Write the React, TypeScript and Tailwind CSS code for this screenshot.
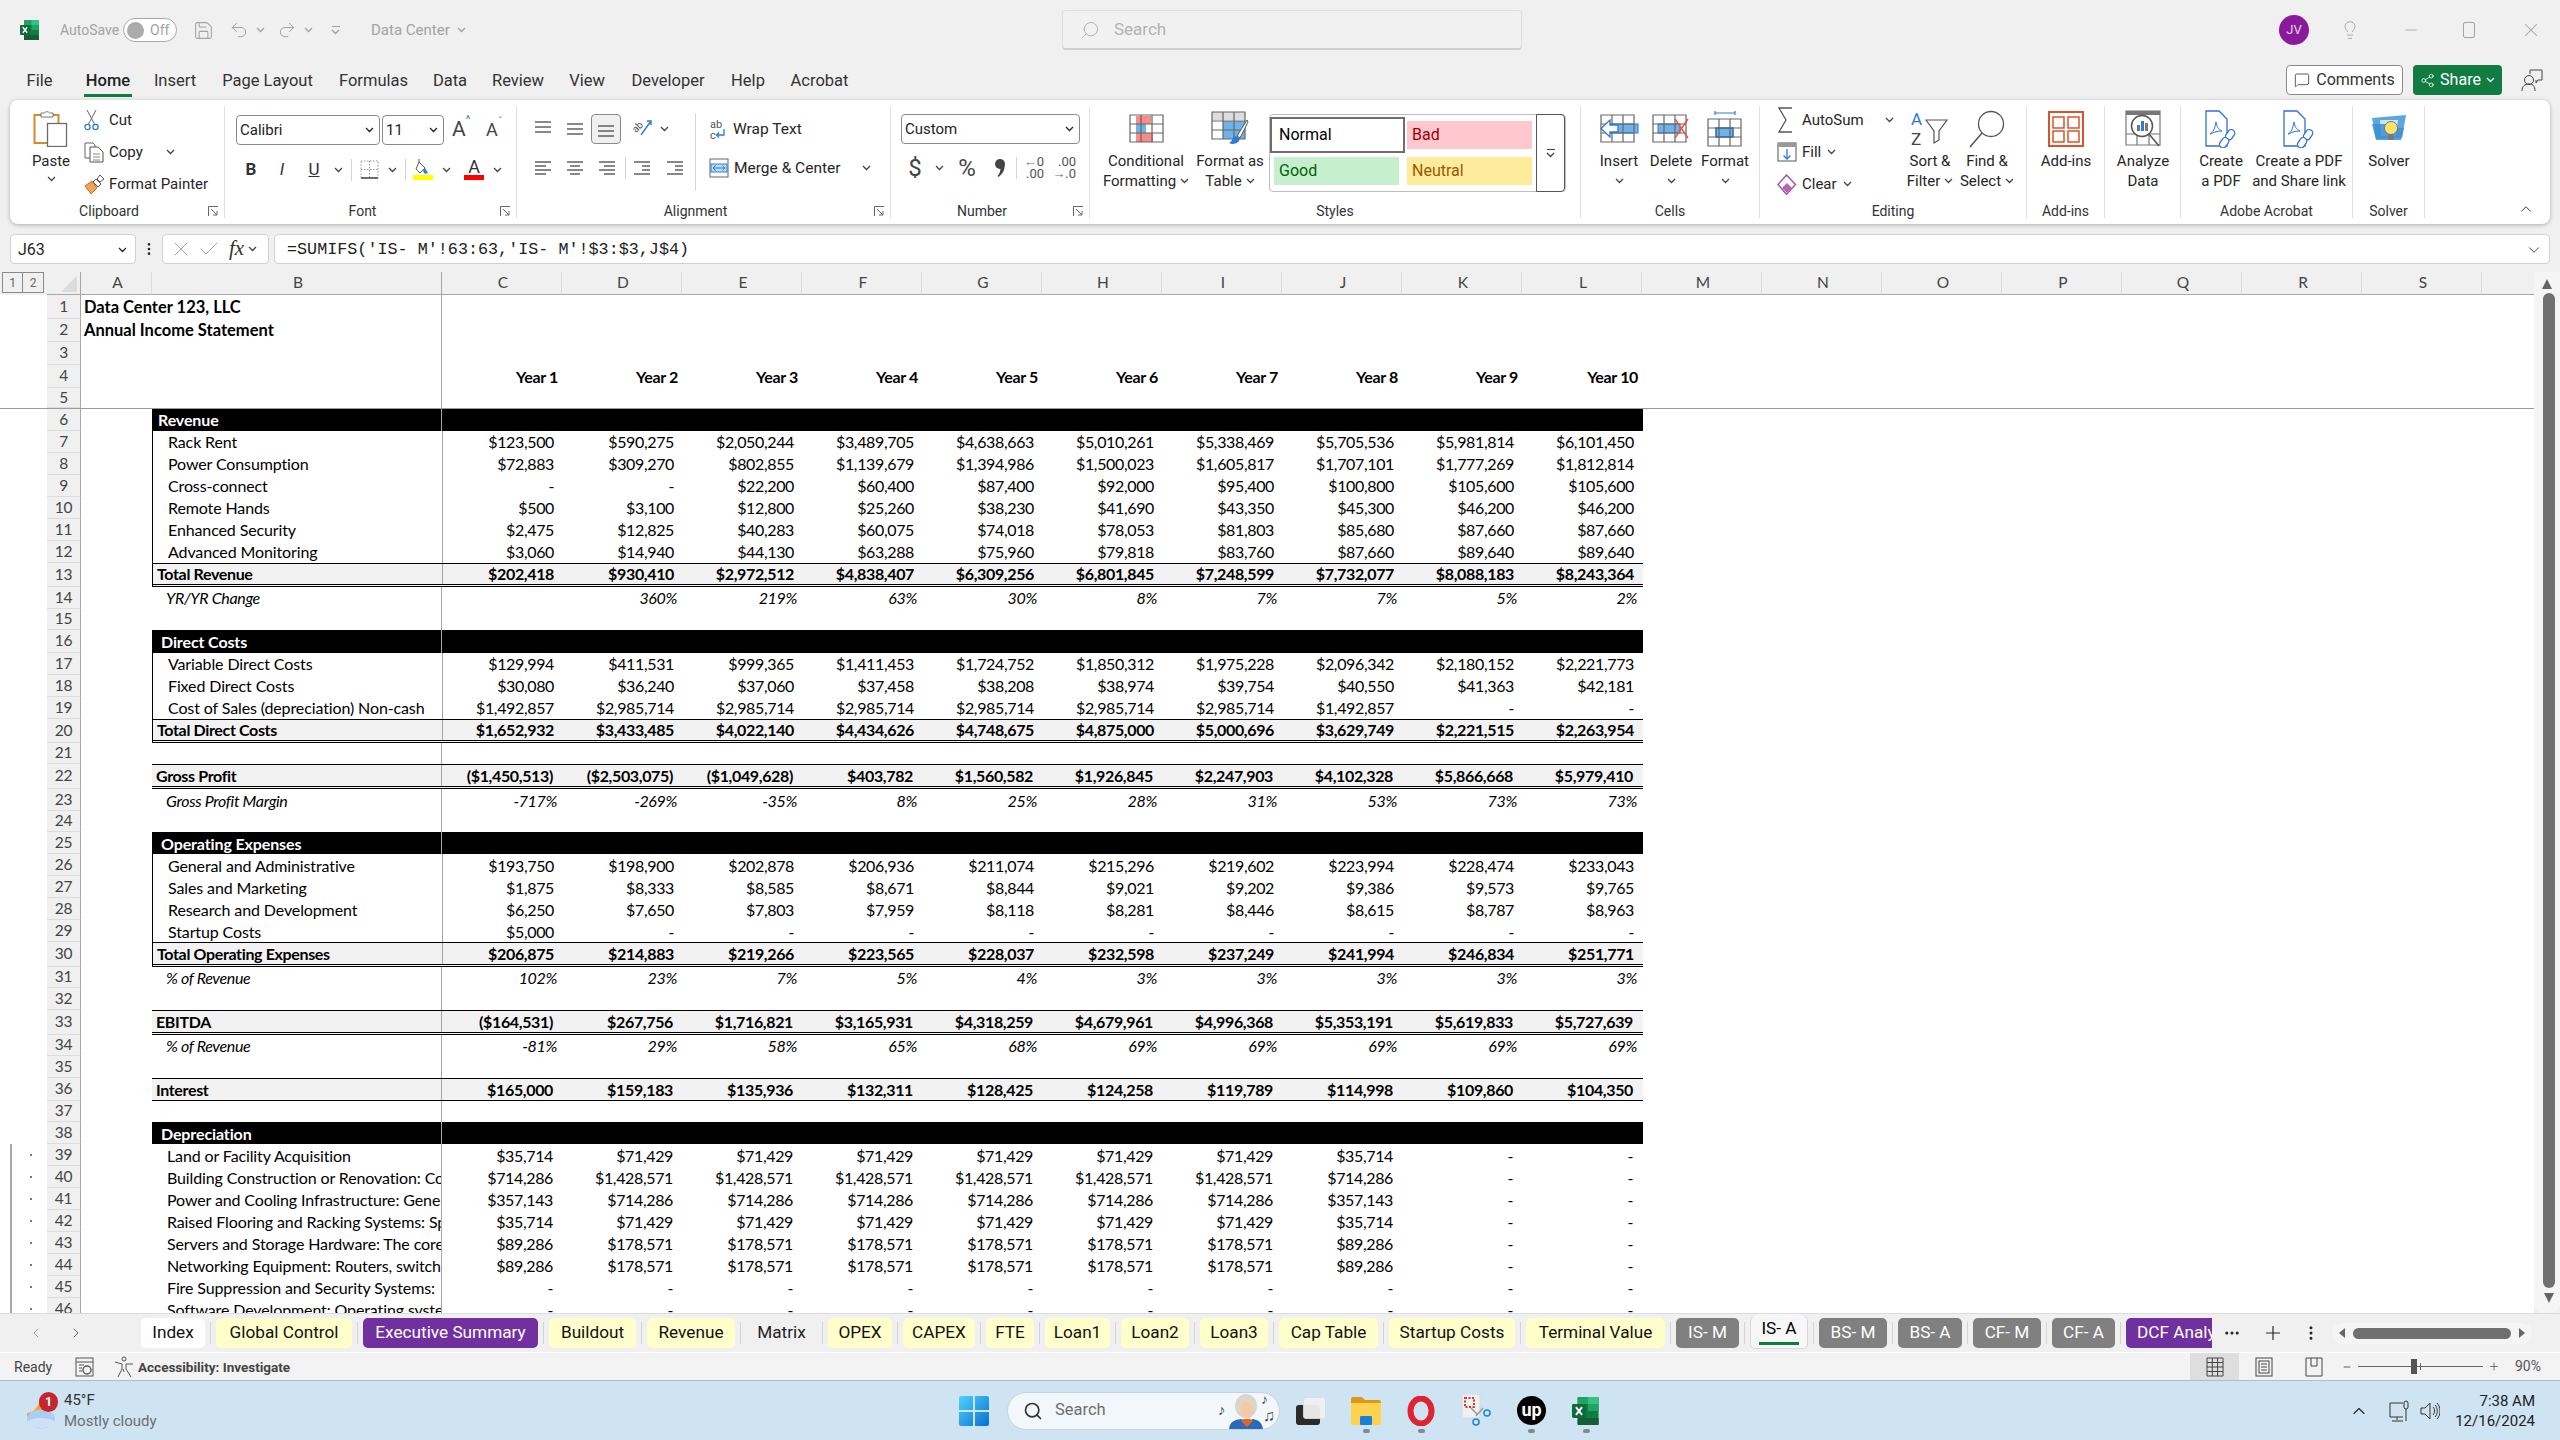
import React from "react";
import { Search, Lightbulb, Minus, X, ChevronUp, ChevronDown, ChevronLeft, ChevronRight, Plus, Ellipsis, EllipsisVertical, Check, Undo2, Redo2, Save, MessageSquare, Share2 } from "lucide-react";

const Chev = ({ c = "#444" }: { c?: string }) => (
  <svg width="9" height="6" viewBox="0 0 9 6" className="inline-block shrink-0"><path d="M1 1l3.5 3.5L8 1" fill="none" stroke={c} strokeWidth="1.3" /></svg>
);
const Launcher = () => (
  <svg width="11" height="11" viewBox="0 0 11 11"><path d="M.5 10V.5H10M3 3l6 6M9 5v4H5" fill="none" stroke="#666" strokeWidth="1" /></svg>
);

type Grp = { w: string; label?: string; launcher?: boolean; children: React.ReactNode };
const Group = ({ w, label, launcher, children }: Grp) => (
  <div className={`${w} h-full shrink-0 flex flex-col border-r border-[#e0e0e0]`}>
    <div className="h-[98px] flex">{children}</div>
    <div className="h-[14px] mt-[1px] flex items-center">
      <div className="flex-1 text-center text-[14px] leading-[14px] text-[#333] whitespace-nowrap">{label}</div>
      {launcher && <div className="w-[16px] flex"><Launcher /></div>}
    </div>
  </div>
);
const Big = ({ w, ml = "", icon, l1, l2, chev, chev2 }: { w: string; ml?: string; icon: React.ReactNode; l1: string; l2?: string; chev?: boolean; chev2?: boolean }) => (
  <div className={`${w} ${ml} shrink-0 flex flex-col items-center text-[15px] leading-[20px] text-[#262626] whitespace-nowrap`}>
    <div className="h-[45px] flex items-center justify-center">{icon}</div>
    <div className="h-[20px] flex items-center gap-[4px]">{l1}{chev2 && <Chev />}</div>
    <div className="h-[20px] flex items-center gap-[4px]">{l2}{chev && <Chev />}</div>
  </div>
);
const Small = ({ icon, text, chev, chevMl = "ml-[6px]" }: { icon: React.ReactNode; text: string; chev?: boolean; chevMl?: string }) => (
  <div className="h-[32px] flex items-center text-[15px] text-[#262626] whitespace-nowrap">
    <div className="w-[25px] flex justify-start">{icon}</div>
    <span>{text}</span>
    {chev && <span className={`${chevMl} flex`}><Chev /></span>}
  </div>
);
const Box = ({ w, children }: { w: string; children?: React.ReactNode }) => <div className={`${w} h-[30px] shrink-0 flex items-center justify-center`}>{children}</div>;
const VBar = ({ h = "h-[22px]" }: { h?: string }) => <div className={`w-px ${h} bg-[#d4d4d4] shrink-0`} />;
const Combo = ({ w, text }: { w: string; text: string }) => (
  <div className={`${w} h-[30px] shrink-0 rounded-[4px] border border-[#8a8a8a] bg-white flex items-center justify-between pl-[3px] pr-[5px] text-[15px] text-[#222]`}>
    <span>{text}</span><Chev c="#222" />
  </div>
);
const Lines = ({ y, x }: { y: number[]; x: number[][] }) => (
  <svg width="18" height="18" viewBox="0 0 18 18">{y.map((v, i) => <line key={i} x1={x[i][0]} x2={x[i][1]} y1={v} y2={v} stroke="#555" strokeWidth="1.4" />)}</svg>
);

const ExcelLogo = ({ s = 20 }: { s?: number }) => (
  <svg width={s} height={s} viewBox="0 0 20 20">
    <rect x="4" y="0" width="15" height="20" rx="1.2" fill="#107c41" />
    <rect x="4" y="0" width="15" height="5" fill="#21a366" />
    <rect x="11.5" y="0" width="7.5" height="5" fill="#33c481" />
    <rect x="11.5" y="5" width="7.5" height="5" fill="#21a366" />
    <rect x="4" y="15" width="15" height="5" fill="#185c37" />
    <rect x="0" y="5" width="10" height="10" rx="1" fill="#0e6b3a" />
    <path d="M2.8 7.3l4.4 5.4M7.2 7.3l-4.4 5.4" stroke="#fff" strokeWidth="1.4" />
  </svg>
);
const PasteIc = () => (
  <svg width="36" height="38" viewBox="0 0 36 38">
    <rect x="1.5" y="6" width="24" height="28" fill="#fff" stroke="#d58a35" strokeWidth="2" />
    <path d="M8 8V4h3.5a3 3 0 0 1 5 0H20v4z" fill="#fff" stroke="#777" />
    <rect x="14.5" y="14.5" width="19" height="23" fill="#fff" stroke="#6b6b6b" strokeWidth="1.3" />
  </svg>
);
const CutIc = () => (
  <svg width="15" height="21" viewBox="0 0 15 21">
    <path d="M3 0l7.5 14M12 0L4.500 14" fill="none" stroke="#666" />
    <circle cx="3.500" cy="17" r="2.600" fill="none" stroke="#2b7cd3" strokeWidth="1.300" />
    <circle cx="11.500" cy="17" r="2.600" fill="none" stroke="#2b7cd3" strokeWidth="1.300" />
  </svg>
);
const CopyIc = () => (
  <svg width="21" height="21" viewBox="0 0 21 21">
    <path d="M1 1h8l2 2v13H1z" fill="#fff" stroke="#666" />
    <path d="M6 5h8l5 5v10H6z" fill="#fff" stroke="#555" />
    <path d="M9 12h7M9 15h7M9 18h7" stroke="#888" />
  </svg>
);
const PainterIc = () => (
  <svg width="21" height="21" viewBox="0 0 21 21">
    <path d="M1 12l6 8 6-6-5-7z" fill="#f0a35a" stroke="#d2691e" />
    <path d="M9 8l5 5 3-3-5-5z" fill="#fff" stroke="#555" />
    <path d="M13 5l3-4 4 4-4 3z" fill="#fff" stroke="#555" />
  </svg>
);
const BordersIc = () => (
  <svg width="19" height="19" viewBox="0 0 19 19">
    <path d="M1 1h17v17H1zM9.500 1v17M1 9.500h17" fill="none" stroke="#999" strokeDasharray="1.500 1.500" />
    <path d="M1 18h17" stroke="#444" strokeWidth="1.500" />
  </svg>
);
const FillIc = () => (
  <svg width="20" height="21" viewBox="0 0 20 21">
    <path d="M6 3l6 6-5 5-4-4zM6 3V0" fill="#fff" stroke="#555" />
    <path d="M12 9l3 5-3 1-2-3z" fill="#2b7cd3" />
    <rect x="0" y="16" width="20" height="5" fill="#ffff00" />
  </svg>
);
const ColorA = ({ c = "#ff0000" }: { c?: string }) => (
  <div className="flex flex-col items-center leading-[15px] text-[18px] text-[#333] w-[20px]">
    <span className="h-[16px]">A</span>
    <span className="w-[20px] h-[5px]" style={{ backgroundColor: c }} />
  </div>
);
const OrientIc = () => (
  <svg width="21" height="21" viewBox="0 0 21 21">
    <path d="M9 16L19 2M15 2h4v4" fill="none" stroke="#2b7cd3" strokeWidth="1.400" />
    <text x="0" y="11" fontSize="10" fill="#555" transform="rotate(-45 6 8)" fontFamily="Roboto">ab</text>
  </svg>
);
const WrapIc = () => (
  <svg width="19" height="21" viewBox="0 0 19 21">
    <text x="1" y="9" fontSize="11" fill="#555" fontFamily="Roboto">ab</text>
    <text x="1" y="20" fontSize="11" fill="#555" fontFamily="Roboto">c</text>
    <path d="M15 10v6h-7m2-2.500L7.500 16 10 18.500" fill="none" stroke="#2b7cd3" strokeWidth="1.300" />
  </svg>
);
const MergeIc = () => (
  <svg width="20" height="20" viewBox="0 0 20 20">
    <rect x="1" y="1" width="18" height="18" fill="#fff" stroke="#666" />
    <rect x="2" y="6" width="16" height="8" fill="#bcdcf5" stroke="#2b7cd3" />
    <path d="M4 10h12M6.500 7.500L4 10l2.500 2.500M13.500 7.500L16 10l-2.500 2.500" fill="none" stroke="#2b7cd3" />
  </svg>
);
const DecIc = ({ flip }: { flip?: boolean }) => (
  <div className="w-[22px] h-[24px] text-[13px] leading-[12px] text-[#555] whitespace-nowrap">
    <div className="flex justify-end">{flip ? ".00" : <><span className="text-[#2b7cd3]">←</span>0</>}</div>
    <div className="flex justify-end">{flip ? <><span className="text-[#2b7cd3]">→</span>.0</> : ".00"}</div>
  </div>
);
const CommaIc = () => (
  <svg width="12" height="20" viewBox="0 0 12 20"><circle cx="6" cy="6" r="5" fill="#444" /><path d="M10.500 7c.500 5-2 9-6 12l-1-1c2-2 3-5 3-8z" fill="#444" /></svg>
);
const TableBase = () => <path d="M1 1h33v27H1zM12 1v27M23 1v27M1 10h33M1 19h33" fill="none" stroke="#666" strokeWidth="1.200" />;
const CondIc = () => (
  <svg width="35" height="29" viewBox="0 0 35 29">
    <rect x="7" y="2" width="15" height="8" fill="#f98b8b" /><rect x="7" y="10" width="10" height="9" fill="#6fb3e8" /><rect x="7" y="19" width="17" height="9" fill="#f98b8b" />
    <TableBase />
  </svg>
);
const FmtTableIc = () => (
  <svg width="38" height="35" viewBox="0 0 38 35">
    <rect x="1" y="1" width="33" height="8" fill="#ddd" /><rect x="12" y="10" width="22" height="18" fill="#6fb3e8" />
    <TableBase />
    <path d="M36 9L26 25l3 2L37 11z" fill="#fff" stroke="#555" />
    <path d="M24 25c-3 1-2 5-6 7 4 2 10 1 11-5z" fill="#2b7cd3" />
  </svg>
);
const InsIc = () => (
  <svg width="40" height="29" viewBox="0 0 40 29">
    <rect x="8" y="10" width="31" height="9" fill="#6fb3e8" stroke="#2b7cd3" />
    <path d="M2 1h33v27H2zM13 1v27M24 1v27M2 10h33M2 19h33" fill="none" stroke="#666" strokeWidth="1.200" />
    <path d="M11 6l-9 8.500L11 23v-5h8v-7h-8z" fill="#fff" stroke="#2b7cd3" strokeWidth="1.300" />
  </svg>
);
const DelIc = () => (
  <svg width="38" height="29" viewBox="0 0 38 29">
    <rect x="6" y="10" width="22" height="9" fill="#6fb3e8" stroke="#2b7cd3" />
    <path d="M1 1h33v27H1zM12 1v27M23 1v27M1 10h33M1 19h33" fill="none" stroke="#666" strokeWidth="1.200" />
    <path d="M23 5l13 19M36 5L23 24" stroke="#ee4b4b" strokeWidth="1.400" />
  </svg>
);
const FmtIc = () => (
  <svg width="36" height="36" viewBox="0 0 36 36">
    <path d="M8 2h20M8 0v4M28 0v4" stroke="#2b7cd3" strokeWidth="1.200" />
    <rect x="1" y="8" width="33" height="27" fill="#fff" />
    <rect x="9" y="17" width="17" height="9" fill="#6fb3e8" stroke="#1a6fb8" strokeWidth="1.500" />
    <path d="M1 8h33v27H1zM12 8v27M23 8v27M1 17h33M1 26h33" fill="none" stroke="#666" strokeWidth="1.200" />
  </svg>
);
const SigmaIc = () => <svg width="17" height="30" viewBox="0 0 17 30"><path d="M15 3H2l7 12-7 12h13" fill="none" stroke="#555" strokeWidth="1.300" /></svg>;
const FillDownIc = () => (
  <svg width="20" height="20" viewBox="0 0 20 20">
    <rect x="1" y="1" width="18" height="18" fill="#fff" stroke="#555" /><rect x="1" y="1" width="18" height="4" fill="#999" />
    <path d="M10 7v10M6.500 13.500L10 17l3.500-3.500" fill="none" stroke="#2b7cd3" strokeWidth="1.300" />
  </svg>
);
const ClearIc = () => (
  <svg width="20" height="21" viewBox="0 0 20 21">
    <path d="M9.500 1l9 9.500-9 10L1 10.500z" fill="#fff" stroke="#a349a4" strokeWidth="1.300" />
    <path d="M5 14l5-5 5 5-5 5z" fill="#b565b5" />
  </svg>
);
const SortIc = () => (
  <svg width="38" height="36" viewBox="0 0 38 36">
    <text x="0" y="14" fontSize="17" fill="#2b7cd3" fontFamily="Roboto">A</text>
    <text x="0" y="34" fontSize="17" fill="#444" fontFamily="Roboto">Z</text>
    <path d="M15 9h21l-8 11v9l-5 3V20z" fill="#fff" stroke="#555" strokeWidth="1.200" />
  </svg>
);
const FindIc = () => (
  <svg width="38" height="38" viewBox="0 0 38 38">
    <circle cx="23" cy="14" r="12.500" fill="#fff" stroke="#555" strokeWidth="1.300" />
    <path d="M14 23L2 37" stroke="#555" strokeWidth="1.500" />
  </svg>
);
const AddinsIc = () => (
  <svg width="36" height="36" viewBox="0 0 36 36">
    <rect x="1" y="1" width="34" height="34" fill="none" stroke="#d8552b" strokeWidth="2" />
    <rect x="5" y="6" width="11" height="11" fill="none" stroke="#d8552b" strokeWidth="1.500" /><rect x="20" y="6" width="11" height="11" fill="none" stroke="#d8552b" strokeWidth="1.500" />
    <rect x="5" y="20" width="11" height="11" fill="none" stroke="#d8552b" strokeWidth="1.500" /><rect x="20" y="20" width="11" height="11" fill="none" stroke="#d8552b" strokeWidth="1.500" />
  </svg>
);
const AnalyzeIc = () => (
  <svg width="36" height="37" viewBox="0 0 36 37">
    <path d="M1 1h34v34H1zM1 24h34M12 24v11M24 24v11" fill="none" stroke="#777" strokeWidth="1.200" />
    <rect x="1" y="1" width="34" height="4" fill="#777" />
    <circle cx="17" cy="16" r="10.500" fill="#fff" stroke="#555" strokeWidth="1.500" />
    <rect x="12" y="15" width="3" height="6" fill="#777" /><rect x="16" y="11" width="3" height="10" fill="#2b7cd3" /><rect x="20" y="13" width="3" height="8" fill="#777" />
    <path d="M24 24l10 12" stroke="#555" strokeWidth="1.500" />
  </svg>
);
const PdfIc = () => (
  <svg width="32" height="38" viewBox="0 0 32 38">
    <path d="M1 1h13l8 8v27H1z" fill="#fff" stroke="#2f6fdb" strokeWidth="1.300" />
    <path d="M5 24c3-1 5-6 6-12 1 5 2 7 6 9-5 0-7 1-12 3z" fill="none" stroke="#2f6fdb" />
    <rect x="22" y="19" width="7" height="11" rx="3.500" fill="#fff" stroke="#2f6fdb" strokeWidth="1.300" transform="rotate(35 25 24)" />
    <rect x="16" y="27" width="7" height="11" rx="3.500" fill="#fff" stroke="#2f6fdb" strokeWidth="1.300" transform="rotate(35 19 32)" />
  </svg>
);
const SolverIc = () => (
  <svg width="40" height="30" viewBox="0 0 40 30">
    <path d="M3 4l34-3-4 23-26 1z" fill="#5aa8e0" />
    <path d="M11 6h18l-2 16H12z" fill="#cfe5f7" />
    <path d="M3 10h14l2 4h16l-3 12H7z" fill="#3e8fd0" opacity=".85" />
    <circle cx="22" cy="14" r="6.500" fill="#ffe26b" stroke="#777" />
    <rect x="19.500" y="20" width="5" height="6" fill="#777" />
  </svg>
);

const cols = ["C", "D", "E", "F", "G", "H", "I", "J", "K", "L"];
const D = "-";
type K = "title" | "year" | "blank" | "black" | "item" | "total" | "pct" | "band" | "single";
type R = { n: number; h: string; k: K; l?: string; v?: string[]; ind?: string; edge?: boolean };
const dashes = Array(10).fill(D);
const rows: R[] = [
  { n: 1, h: "h-[24px]", k: "title", l: "Data Center 123, LLC" },
  { n: 2, h: "h-[23px]", k: "title", l: "Annual Income Statement" },
  { n: 3, h: "h-[23px]", k: "blank" },
  { n: 4, h: "h-[23px]", k: "year", v: cols.map((_, i) => `Year ${i + 1}`) },
  { n: 5, h: "h-[21px]", k: "blank" },
  { n: 6, h: "h-[22px]", k: "black", l: "Revenue", ind: "pl-[6px]" },
  { n: 7, h: "h-[22px]", k: "item", edge: true, l: "Rack Rent", v: ["$123,500", "$590,275", "$2,050,244", "$3,489,705", "$4,638,663", "$5,010,261", "$5,338,469", "$5,705,536", "$5,981,814", "$6,101,450"] },
  { n: 8, h: "h-[22px]", k: "item", edge: true, l: "Power Consumption", v: ["$72,883", "$309,270", "$802,855", "$1,139,679", "$1,394,986", "$1,500,023", "$1,605,817", "$1,707,101", "$1,777,269", "$1,812,814"] },
  { n: 9, h: "h-[22px]", k: "item", edge: true, l: "Cross-connect", v: [D, D, "$22,200", "$60,400", "$87,400", "$92,000", "$95,400", "$100,800", "$105,600", "$105,600"] },
  { n: 10, h: "h-[22px]", k: "item", edge: true, l: "Remote Hands", v: ["$500", "$3,100", "$12,800", "$25,260", "$38,230", "$41,690", "$43,350", "$45,300", "$46,200", "$46,200"] },
  { n: 11, h: "h-[22px]", k: "item", edge: true, l: "Enhanced Security", v: ["$2,475", "$12,825", "$40,283", "$60,075", "$74,018", "$78,053", "$81,803", "$85,680", "$87,660", "$87,660"] },
  { n: 12, h: "h-[22px]", k: "item", edge: true, l: "Advanced Monitoring", v: ["$3,060", "$14,940", "$44,130", "$63,288", "$75,960", "$79,818", "$83,760", "$87,660", "$89,640", "$89,640"] },
  { n: 13, h: "h-[24px]", k: "total", edge: true, l: "Total Revenue", v: ["$202,418", "$930,410", "$2,972,512", "$4,838,407", "$6,309,256", "$6,801,845", "$7,248,599", "$7,732,077", "$8,088,183", "$8,243,364"] },
  { n: 14, h: "h-[22px]", k: "pct", l: "YR/YR Change", v: ["", "360%", "219%", "63%", "30%", "8%", "7%", "7%", "5%", "2%"] },
  { n: 15, h: "h-[21px]", k: "blank" },
  { n: 16, h: "h-[23px]", k: "black", l: "Direct Costs", ind: "pl-[9px]" },
  { n: 17, h: "h-[22px]", k: "item", edge: true, l: "Variable Direct Costs", v: ["$129,994", "$411,531", "$999,365", "$1,411,453", "$1,724,752", "$1,850,312", "$1,975,228", "$2,096,342", "$2,180,152", "$2,221,773"] },
  { n: 18, h: "h-[22px]", k: "item", edge: true, l: "Fixed Direct Costs", v: ["$30,080", "$36,240", "$37,060", "$37,458", "$38,208", "$38,974", "$39,754", "$40,550", "$41,363", "$42,181"] },
  { n: 19, h: "h-[22px]", k: "item", edge: true, l: "Cost of Sales (depreciation) Non-cash", v: ["$1,492,857", "$2,985,714", "$2,985,714", "$2,985,714", "$2,985,714", "$2,985,714", "$2,985,714", "$1,492,857", D, D] },
  { n: 20, h: "h-[24px]", k: "total", edge: true, l: "Total Direct Costs", v: ["$1,652,932", "$3,433,485", "$4,022,140", "$4,434,626", "$4,748,675", "$4,875,000", "$5,000,696", "$3,629,749", "$2,221,515", "$2,263,954"] },
  { n: 21, h: "h-[21px]", k: "blank" },
  { n: 22, h: "h-[25px]", k: "total", l: "Gross Profit", v: ["($1,450,513)", "($2,503,075)", "($1,049,628)", "$403,782", "$1,560,582", "$1,926,845", "$2,247,903", "$4,102,328", "$5,866,668", "$5,979,410"] },
  { n: 23, h: "h-[22px]", k: "pct", l: "Gross Profit Margin", v: ["-717%", "-269%", "-35%", "8%", "25%", "28%", "31%", "53%", "73%", "73%"] },
  { n: 24, h: "h-[21px]", k: "blank" },
  { n: 25, h: "h-[22px]", k: "black", l: "Operating Expenses", ind: "pl-[9px]" },
  { n: 26, h: "h-[22px]", k: "item", edge: true, l: "General and Administrative", v: ["$193,750", "$198,900", "$202,878", "$206,936", "$211,074", "$215,296", "$219,602", "$223,994", "$228,474", "$233,043"] },
  { n: 27, h: "h-[22px]", k: "item", edge: true, l: "Sales and Marketing", v: ["$1,875", "$8,333", "$8,585", "$8,671", "$8,844", "$9,021", "$9,202", "$9,386", "$9,573", "$9,765"] },
  { n: 28, h: "h-[22px]", k: "item", edge: true, l: "Research and Development", v: ["$6,250", "$7,650", "$7,803", "$7,959", "$8,118", "$8,281", "$8,446", "$8,615", "$8,787", "$8,963"] },
  { n: 29, h: "h-[22px]", k: "item", edge: true, l: "Startup Costs", v: ["$5,000", D, D, D, D, D, D, D, D, D] },
  { n: 30, h: "h-[25px]", k: "total", edge: true, l: "Total Operating Expenses", v: ["$206,875", "$214,883", "$219,266", "$223,565", "$228,037", "$232,598", "$237,249", "$241,994", "$246,834", "$251,771"] },
  { n: 31, h: "h-[21px]", k: "pct", l: "% of Revenue", v: ["102%", "23%", "7%", "5%", "4%", "3%", "3%", "3%", "3%", "3%"] },
  { n: 32, h: "h-[22px]", k: "blank" },
  { n: 33, h: "h-[25px]", k: "total", l: "EBITDA", v: ["($164,531)", "$267,756", "$1,716,821", "$3,165,931", "$4,318,259", "$4,679,961", "$4,996,368", "$5,353,191", "$5,619,833", "$5,727,639"] },
  { n: 34, h: "h-[21px]", k: "pct", l: "% of Revenue", v: ["-81%", "29%", "58%", "65%", "68%", "69%", "69%", "69%", "69%", "69%"] },
  { n: 35, h: "h-[22px]", k: "blank" },
  { n: 36, h: "h-[23px]", k: "single", l: "Interest", v: ["$165,000", "$159,183", "$135,936", "$132,311", "$128,425", "$124,258", "$119,789", "$114,998", "$109,860", "$104,350"] },
  { n: 37, h: "h-[21px]", k: "blank" },
  { n: 38, h: "h-[22px]", k: "black", l: "Depreciation", ind: "pl-[9px]" },
  { n: 39, h: "h-[22px]", k: "item", l: "Land or Facility Acquisition", v: ["$35,714", "$71,429", "$71,429", "$71,429", "$71,429", "$71,429", "$71,429", "$35,714", D, D] },
  { n: 40, h: "h-[22px]", k: "item", l: "Building Construction or Renovation: Construction of the", v: ["$714,286", "$1,428,571", "$1,428,571", "$1,428,571", "$1,428,571", "$1,428,571", "$1,428,571", "$714,286", D, D] },
  { n: 41, h: "h-[22px]", k: "item", l: "Power and Cooling Infrastructure: Generators and", v: ["$357,143", "$714,286", "$714,286", "$714,286", "$714,286", "$714,286", "$714,286", "$357,143", D, D] },
  { n: 42, h: "h-[22px]", k: "item", l: "Raised Flooring and Racking Systems: Specialized", v: ["$35,714", "$71,429", "$71,429", "$71,429", "$71,429", "$71,429", "$71,429", "$35,714", D, D] },
  { n: 43, h: "h-[22px]", k: "item", l: "Servers and Storage Hardware: The core of the center", v: ["$89,286", "$178,571", "$178,571", "$178,571", "$178,571", "$178,571", "$178,571", "$89,286", D, D] },
  { n: 44, h: "h-[22px]", k: "item", l: "Networking Equipment: Routers, switches and cabling", v: ["$89,286", "$178,571", "$178,571", "$178,571", "$178,571", "$178,571", "$178,571", "$89,286", D, D] },
  { n: 45, h: "h-[22px]", k: "item", l: "Fire Suppression and Security Systems:", v: dashes },
  { n: 46, h: "h-[22px]", k: "item", l: "Software Development: Operating systems and", v: dashes },
];

const cellTxt = "font-[Lato] text-[16px] tracking-[-0.35px] text-black whitespace-nowrap";
const labelTxt = "font-[Lato] text-[16px] tracking-[-0.12px] text-black whitespace-nowrap";
const Row = ({ r }: { r: R }) => {
  const band = r.k === "total" ? "bg-[#f2f2f2] border-t border-black border-b-[3px] border-double border-t-solid" : r.k === "single" ? "bg-[#f2f2f2] border-y border-black" : r.k === "black" ? "bg-black" : "";
  const isB = r.k === "total" || r.k === "single" || r.k === "year" || r.k === "black";
  const bold = isB ? "font-bold" : "";
  const lab = r.k === "item" ? `pl-[15px] ${labelTxt}` : r.k === "pct" ? `pl-[14px] italic text-[13.5px] ${cellTxt}` : r.k === "black" ? `${r.ind} ${labelTxt} text-white` : `pl-[4px] ${cellTxt}`;
  const right = r.k === "pct" ? "pr-[5px] italic text-[13.5px]" : r.k === "year" ? "pr-[4px]" : "pr-[9px]";
  const nudge = r.n >= 23 ? "pt-[1px]" : "";
  return (
    <div className={`${r.h} flex shrink-0 ${r.n === 5 ? "border-b border-[#9a9a9a]" : ""}`}>
      <div className="w-[47px] shrink-0 flex items-center relative">
        {r.n >= 39 && <div className="ml-[10px] w-[2px] h-full bg-[#a8a8a8]" />}
        {r.n >= 39 && <div className="ml-[18px] w-[2px] h-[2px] bg-[#777]" />}
      </div>
      <div className="w-[34px] shrink-0 bg-[#f0f0f0] border-b border-r border-b-[#dcdcdc] border-r-[#a6a6a6] flex items-center justify-center font-[Lato] text-[15.5px] tracking-[-0.3px] text-[#444]">{r.n}</div>
      <div className="w-[71px] shrink-0 overflow-visible flex items-center pl-[3px] font-[Lato] text-[16.5px] text-black whitespace-nowrap font-bold">{r.k === "title" ? r.l : ""}</div>
      <div className={`w-[1491px] shrink-0 flex ${band} ${r.edge ? "border-l border-l-black" : ""}`}>
        <div className={`w-[290px] shrink-0 flex-none overflow-hidden flex items-center border-r border-r-[#a6a6a6] ${bold} ${lab} ${nudge}`}>{r.k !== "title" ? r.l : ""}</div>
        {r.v && r.v.map((v, i) => (
          <div key={i} className={`w-[120px] shrink-0 flex items-center justify-end ${cellTxt} ${bold} ${right} ${nudge}`}>{v}</div>
        ))}
      </div>
    </div>
  );
};

const tabY = "bg-[#ffffcc] text-[#111]";
const tabG = "bg-[#808080] text-white";
const tabP = "bg-[#7030a0] text-white";
const tabs: { t: string; w: string; c: string }[] = [
  { t: "Index", w: "w-[64px]", c: "bg-white text-[#111]" },
  { t: "Global Control", w: "w-[136px]", c: tabY },
  { t: "Executive Summary", w: "w-[175px]", c: tabP },
  { t: "Buildout", w: "w-[87px]", c: tabY },
  { t: "Revenue", w: "w-[88px]", c: tabY },
  { t: "Matrix", w: "w-[71px]", c: "text-[#222]" },
  { t: "OPEX", w: "w-[64px]", c: tabY },
  { t: "CAPEX", w: "w-[72px]", c: tabY },
  { t: "FTE", w: "w-[48px]", c: tabY },
  { t: "Loan1", w: "w-[65px]", c: tabY },
  { t: "Loan2", w: "w-[68px]", c: tabY },
  { t: "Loan3", w: "w-[68px]", c: tabY },
  { t: "Cap Table", w: "w-[99px]", c: tabY },
  { t: "Startup Costs", w: "w-[126px]", c: tabY },
  { t: "Terminal Value", w: "w-[139px]", c: tabY },
  { t: "IS- M", w: "w-[63px]", c: tabG },
  { t: "IS- A", w: "w-[58px]", c: "active" },
  { t: "BS- M", w: "w-[68px]", c: tabG },
  { t: "BS- A", w: "w-[64px]", c: tabG },
  { t: "CF- M", w: "w-[68px]", c: tabG },
  { t: "CF- A", w: "w-[63px]", c: tabG },
];
const menu: { t: string; w: string }[] = [
  { t: "Insert", w: "w-[42px]" }, { t: "Page Layout", w: "w-[93px]" }, { t: "Formulas", w: "w-[69px]" }, { t: "Data", w: "w-[34px]" }, { t: "Review", w: "w-[52px]" }, { t: "View", w: "w-[36px]" }, { t: "Developer", w: "w-[76px]" }, { t: "Help", w: "w-[34px]" }, { t: "Acrobat", w: "w-[59px]" },
];
const colLetters = ["C", "D", "E", "F", "G", "H", "I", "J", "K", "L", "M", "N", "O", "P", "Q", "R", "S"];

export default function App() {
  return (
    <div className="w-[2560px] h-[1440px] overflow-hidden bg-[#f0f0f0] flex flex-col font-['Roboto'] text-[#262626]">
      {/* title bar */}
      <div className="h-[60px] shrink-0 flex items-center relative text-[#a3a3a3] text-[14px]">
        <div className="ml-[20px] flex"><ExcelLogo /></div>
        <span className="ml-[20px] w-[55px] whitespace-nowrap">AutoSave</span>
        <div className="ml-[8px] w-[54px] h-[24px] rounded-full border border-[#a8a8a8] bg-white flex items-center px-[3px] gap-[6px] text-[14px]">
          <span className="w-[17px] h-[17px] rounded-full bg-[#ababab]" /><span>Off</span>
        </div>
        <div className="ml-[16px] flex"><Save size={21} strokeWidth={1.2} /></div>
        <div className="ml-[15px] flex"><Undo2 size={20} strokeWidth={1.2} /></div>
        <div className="ml-[7px] flex"><Chev c="#a3a3a3" /></div>
        <div className="ml-[12px] flex"><Redo2 size={20} strokeWidth={1.2} /></div>
        <div className="ml-[7px] flex"><Chev c="#a3a3a3" /></div>
        <div className="ml-[18px] flex flex-col items-center"><div className="w-[8px] h-px bg-[#a3a3a3] mb-[2px]" /><Chev c="#a3a3a3" /></div>
        <span className="ml-[31px] w-[80px] text-[15px] whitespace-nowrap">Data Center</span>
        <div className="ml-[6px] flex"><Chev c="#a3a3a3" /></div>
        <div className="ml-[596px] w-[460px] h-[40px] shrink-0 rounded-[4px] bg-[#f1f1f1] border border-[#dedede] border-b-2 border-b-[#d0d0d0] flex items-center pl-[17px] text-[17px] text-[#b2b2b2]">
          <Search size={20} strokeWidth={1.2} className="-scale-x-100" /><span className="ml-[14px]">Search</span>
        </div>
        <div className="ml-[757px] w-[30px] h-[30px] rounded-full bg-[#8a1a9b] flex items-center justify-center text-[13px] text-white/80">JV</div>
        <div className="ml-[31px] flex"><Lightbulb size={20} strokeWidth={1.1} /></div>
        <div className="ml-[42px] flex"><Minus size={18} strokeWidth={1.1} /></div>
        <div className="ml-[43px] w-[12px] h-[16px] rounded-[2px] border border-[#a3a3a3]" />
        <div className="ml-[45px] flex"><X size={22} strokeWidth={1.1} /></div>
      </div>
      {/* menu */}
      <div className="h-[40px] shrink-0 flex text-[16.5px] text-[#333]">
        <div className="ml-[27px] mt-[4px] w-[25px] h-[34px] flex items-center justify-center">File</div>
        <div className="ml-[32px] w-[48px] h-[37px] flex flex-col items-center">
          <div className="mt-[4px] h-[34px] flex items-center font-medium text-[#222]">Home</div>
          <div className="-mt-[4px] w-[48px] h-[3px] bg-[#107c41]" />
        </div>
        <div className="ml-[22px] mt-[4px] flex gap-[25px]">
          {menu.map((m) => <div key={m.t} className={`${m.w} h-[34px] flex items-center justify-center whitespace-nowrap`}>{m.t}</div>)}
        </div>
        <div className="ml-auto mt-[5px] w-[117px] h-[30px] rounded-[4px] border border-[#8a8a8a] bg-white flex items-center justify-center gap-[6px] text-[16px]">
          <MessageSquare size={16} strokeWidth={1.2} /><span>Comments</span>
        </div>
        <div className="ml-[10px] mt-[5px] w-[89px] h-[30px] rounded-[4px] bg-[#107c41] text-white flex items-center justify-center gap-[5px] text-[16px]">
          <Share2 size={15} strokeWidth={1.3} /><span>Share</span><Chev c="#fff" />
        </div>
        <div className="ml-[19px] mr-[17px] mt-[9px] w-[22px] h-[22px]">
          <svg width="22" height="24" viewBox="0 0 22 24"><circle cx="8" cy="11" r="4.500" fill="none" stroke="#444" /><path d="M1 22c0-5 3-7 7-7s6 2 6 7M9 5V1h12v10h-4l-2 3v-3" fill="none" stroke="#444" /></svg>
        </div>
      </div>
      {/* ribbon */}
      <div className="mx-[10px] h-[124px] shrink-0 rounded-[8px] bg-white shadow-[0_1px_4px_rgba(0,0,0,0.28)] py-[6px] flex">
        <Group w="w-[215px]" label="Clipboard" launcher>
          <div className="ml-[16px] w-[50px] flex flex-col items-center text-[15px]">
            <div className="pt-[3px]"><PasteIc /></div>
            <div className="h-[20px] mt-[4px] leading-[20px]">Paste</div>
            <div className="mt-[5px] flex"><Chev /></div>
          </div>
          <div className="ml-[8px] -mt-[2px] flex flex-col">
            <Small icon={<CutIc />} text="Cut" />
            <Small icon={<CopyIc />} text="Copy" chev chevMl="ml-[23px]" />
            <Small icon={<PainterIc />} text="Format Painter" />
          </div>
        </Group>
        <Group w="w-[292px]" label="Font" launcher>
          <div className="pl-[11px] pt-[8px] flex flex-col">
            <div className="flex items-center">
              <Combo w="w-[144px]" text="Calibri" />
              <div className="w-[2px]" />
              <Combo w="w-[62px]" text="11" />
              <div className="ml-[8px] w-[22px] flex text-[21px] text-[#444] items-start">A<span className="text-[11px] text-[#2b7cd3] leading-[11px]">^</span></div>
              <div className="ml-[12px] w-[20px] flex text-[18px] text-[#444] items-start">A<span className="text-[11px] text-[#2b7cd3] leading-[11px]">ˇ</span></div>
            </div>
            <div className="mt-[9px] flex items-center text-[#333]">
              <Box w="w-[30px]"><span className="font-bold text-[17px]">B</span></Box>
              <Box w="w-[32px]"><span className="italic text-[17px]">I</span></Box>
              <Box w="w-[32px]"><span className="underline text-[17px]">U</span></Box>
              <Box w="w-[16px]"><Chev /></Box>
              <Box w="w-[10px]"><VBar /></Box>
              <Box w="w-[26px]"><BordersIc /></Box>
              <Box w="w-[20px]"><Chev /></Box>
              <Box w="w-[6px]"><VBar /></Box>
              <Box w="w-[30px]"><FillIc /></Box>
              <Box w="w-[16px]"><Chev /></Box>
              <Box w="w-[40px]"><ColorA /></Box>
              <Box w="w-[6px]"><Chev /></Box>
            </div>
          </div>
        </Group>
        <Group w="w-[374px]" label="Alignment" launcher>
          <div className="pl-[10px] pt-[8px] flex flex-col w-[178px]">
            <div className="flex items-center">
              <Box w="w-[32px]"><Lines y={[2, 7, 12]} x={[[1, 17], [1, 17], [1, 17]]} /></Box>
              <Box w="w-[32px]"><Lines y={[4, 9, 14]} x={[[1, 17], [1, 17], [1, 17]]} /></Box>
              <div className="w-[30px] h-[30px] rounded-[4px] border border-[#8a8a8a] bg-[#f0f0f0] flex items-center justify-center"><Lines y={[6, 11, 16]} x={[[1, 17], [1, 17], [1, 17]]} /></div>
              <div className="ml-[5px]"><Box w="w-[32px]"><OrientIc /></Box></div>
              <Box w="w-[12px]"><Chev /></Box>
            </div>
            <div className="mt-[9px] flex items-center">
              <Box w="w-[32px]"><Lines y={[3, 7, 11, 15]} x={[[1, 17], [1, 12], [1, 17], [1, 12]]} /></Box>
              <Box w="w-[32px]"><Lines y={[3, 7, 11, 15]} x={[[1, 17], [4, 14], [1, 17], [4, 14]]} /></Box>
              <Box w="w-[32px]"><Lines y={[3, 7, 11, 15]} x={[[1, 17], [6, 17], [1, 17], [6, 17]]} /></Box>
              <div className="ml-[2px]"><VBar /></div>
              <div className="ml-[6px]"><Box w="w-[20px]"><Lines y={[3, 7, 11, 15]} x={[[1, 17], [9, 17], [9, 17], [1, 17]]} /></Box></div>
              <div className="ml-[13px]"><Box w="w-[20px]"><Lines y={[3, 7, 11, 15]} x={[[1, 17], [9, 17], [9, 17], [1, 17]]} /></Box></div>
            </div>
          </div>
          <div className="mt-[7px] h-[78px] w-px bg-[#d4d4d4] shrink-0" />
          <div className="pt-[8px] pl-[13px] flex flex-col text-[15.5px] whitespace-nowrap">
            <div className="h-[30px] flex items-center gap-[5px]"><WrapIc /><span className="pt-[1px]">Wrap Text</span></div>
            <div className="mt-[9px] h-[30px] flex items-center gap-[5px]"><MergeIc /><span className="pt-[2px]">Merge &amp; Center</span><span className="ml-[16px] flex"><Chev /></span></div>
          </div>
        </Group>
        <Group w="w-[199px]" label="Number" launcher>
          <div className="pl-[10px] pt-[8px] flex flex-col">
            <Combo w="w-[179px]" text="Custom" />
            <div className="mt-[9px] -ml-[1px] flex items-center text-[#444]">
              <Box w="w-[30px]"><span className="text-[24px]">$</span></Box>
              <Box w="w-[18px]"><Chev /></Box>
              <Box w="w-[38px]"><span className="text-[24px]">%</span></Box>
              <Box w="w-[28px]"><CommaIc /></Box>
              <div className="ml-[2px]"><VBar /></div>
              <div className="ml-[7px]"><Box w="w-[20px]"><DecIc /></Box></div>
              <div className="ml-[11px]"><Box w="w-[20px]"><DecIc flip /></Box></div>
            </div>
          </div>
        </Group>
        <Group w="w-[491px]" label="Styles">
          <Big w="w-[80px]" ml="ml-[16px]" icon={<CondIc />} l1="Conditional" l2="Formatting" chev />
          <Big w="w-[70px]" ml="ml-[9px]" icon={<FmtTableIc />} l1="Format as" l2="Table" chev />
          <div className="ml-[4px] mt-[8px] w-[297px] h-[78px] rounded-[4px] border border-[#bdbdbd] flex text-[16px]">
            <div className="w-[135px] shrink-0 flex flex-col">
              <div className="h-[36px] mt-[2px] border-2 border-[#6e6e6e] bg-white flex items-center pl-[7px] text-black">Normal</div>
              <div className="h-[28px] mt-[4px] ml-[4px] w-[125px] bg-[#c6efce] text-[#006100] flex items-center pl-[5px]">Good</div>
            </div>
            <div className="ml-[2px] w-[125px] shrink-0 flex flex-col">
              <div className="h-[28px] mt-[6px] bg-[#ffc7ce] text-[#9c0006] flex items-center pl-[5px]">Bad</div>
              <div className="h-[28px] mt-[8px] bg-[#ffeb9c] text-[#9c5700] flex items-center pl-[5px]">Neutral</div>
            </div>
            <div className="ml-[4px] w-[29px] h-[78px] -mt-px rounded-r-[4px] border border-[#555] flex flex-col items-center justify-center">
              <div className="w-[8px] h-px bg-[#444] mb-[2px]" /><Chev />
            </div>
          </div>
        </Group>
        <Group w="w-[179px]" label="Cells">
          <Big w="w-[44px]" ml="ml-[16px]" icon={<InsIc />} l1="Insert" l2="" chev />
          <Big w="w-[44px]" ml="ml-[8px]" icon={<DelIc />} l1="Delete" l2="" chev />
          <Big w="w-[50px]" ml="ml-[7px]" icon={<FmtIc />} l1="Format" l2="" chev />
        </Group>
        <Group w="w-[267px]" label="Editing">
          <div className="ml-[17px] w-[128px] -mt-[2px] flex flex-col">
            <Small icon={<SigmaIc />} text="AutoSum" chev chevMl="ml-[21px]" />
            <Small icon={<FillDownIc />} text="Fill" chev />
            <Small icon={<ClearIc />} text="Clear" chev />
          </div>
          <Big w="w-[50px]" icon={<SortIc />} l1="Sort &" l2="Filter" chev />
          <Big w="w-[50px]" ml="ml-[7px]" icon={<FindIc />} l1="Find &" l2="Select" chev />
        </Group>
        <Group w="w-[78px]" label="Add-ins">
          <Big w="w-[78px]" icon={<AddinsIc />} l1="Add-ins" />
        </Group>
        <Group w="w-[76px]">
          <Big w="w-[76px]" icon={<AnalyzeIc />} l1="Analyze" l2="Data" />
        </Group>
        <Group w="w-[172px]" label="Adobe Acrobat">
          <Big w="w-[50px]" ml="ml-[15px]" icon={<PdfIc />} l1="Create" l2="a PDF" />
          <Big w="w-[100px]" ml="ml-[3px]" icon={<PdfIc />} l1="Create a PDF" l2="and Share link" />
        </Group>
        <Group w="w-[72px]" label="Solver">
          <Big w="w-[72px]" icon={<SolverIc />} l1="Solver" />
        </Group>
        <div className="flex-1 flex items-end justify-end pr-[15px]"><ChevronUp size={18} strokeWidth={1.2} /></div>
      </div>
      {/* formula bar */}
      <div className="mt-[10px] h-[30px] shrink-0 flex items-center px-[10px]">
        <div className="w-[126px] h-[30px] rounded-[4px] border border-[#d0d0d0] bg-white flex items-center justify-between pl-[7px] pr-[8px] pt-[1px] text-[16px]"><span>J63</span><Chev c="#222" /></div>
        <div className="w-[26px] flex justify-center"><EllipsisVertical size={16} /></div>
        <div className="w-[107px] h-[30px] rounded-[4px] border border-[#d0d0d0] bg-white flex items-center pl-[6px] text-[#999]">
          <X size={24} strokeWidth={0.9} /><Check size={24} strokeWidth={0.9} className="ml-[4px]" />
          <span className="ml-[8px] italic font-['Liberation_Serif'] text-[21px] text-[#333]">fx</span><span className="ml-[4px] flex"><Chev /></span>
        </div>
        <div className="ml-[5px] flex-1 h-[30px] rounded-[4px] border border-[#d0d0d0] bg-white flex items-center justify-between pl-[12px] pr-[6px] pt-[1px] font-['Liberation_Mono'] text-[16.75px] text-[#222]">
          <span>=SUMIFS('IS- M'!63:63,'IS- M'!$3:$3,J$4)</span><ChevronDown size={18} strokeWidth={1.1} />
        </div>
      </div>
      {/* column headers */}
      <div className="mt-[8px] h-[23px] shrink-0 flex">
        <div className="w-[47px] shrink-0 flex pl-[2px]">
          <div className="w-[21px] h-[21px] border border-[#8a8a8a] flex items-center justify-center text-[12px] text-[#666]">1</div>
          <div className="w-[21px] h-[21px] border border-[#8a8a8a] border-l-0 flex items-center justify-center text-[12px] text-[#666]">2</div>
        </div>
        <div className="w-[34px] shrink-0 border-b border-r border-[#a6a6a6] flex items-end justify-end pr-[3px] pb-[2px]">
          <svg width="16" height="16" viewBox="0 0 16 16"><path d="M16 0v16H0z" fill="#dcdcdc" /></svg>
        </div>
        <div className="w-[71px] shrink-0 border-b border-r border-b-[#a6a6a6] border-r-[#dcdcdc] flex items-center justify-center pl-[3px] font-[Lato] text-[15.5px] text-[#444]">A</div>
        <div className="w-[290px] shrink-0 border-b border-r border-[#a6a6a6] flex items-center justify-center pl-[3px] font-[Lato] text-[15.5px] text-[#444]">B</div>
        {colLetters.map((c) => (
          <div key={c} className="w-[120px] shrink-0 border-b border-r border-b-[#a6a6a6] border-r-[#dcdcdc] flex items-center justify-center pl-[3px] font-[Lato] text-[15.5px] text-[#444]">{c}</div>
        ))}
        <div className="flex-1 border-b border-[#a6a6a6]" />
        <div className="w-[26px] shrink-0 flex justify-center items-center bg-[#f5f5f5]">
          <svg width="12" height="12" viewBox="0 0 12 12"><path d="M6 1l5 10H1z" fill="#666" /></svg>
        </div>
      </div>
      {/* grid */}
      <div className="h-[1018px] shrink-0 flex">
        <div className="flex-1 bg-white overflow-hidden flex flex-col">
          {rows.map((r) => <Row key={r.n} r={r} />)}
        </div>
        <div className="w-[26px] shrink-0 bg-[#f5f5f5] flex flex-col items-center rounded-b-[10px]">
          <div className="w-[12px] h-[995px] rounded-full bg-[#707070] -mt-[2px] ml-[3px]" />
          <svg width="12" height="12" viewBox="0 0 12 12" className="mt-[4px] ml-[3px]"><path d="M1 1h10L6 11z" fill="#666" /></svg>
        </div>
      </div>
      {/* tabs */}
      <div className="h-[39px] shrink-0 border-t border-[#dcdcdc] flex items-center relative text-[17.2px]">
        <div className="ml-[28px] w-[16px] text-[#888] flex"><ChevronLeft size={20} strokeWidth={1.2} /></div>
        <div className="ml-[24px] w-[16px] text-[#444] flex"><ChevronRight size={20} strokeWidth={1.2} /></div>
        <div className="ml-[57px] flex items-center gap-[5px]">
          {tabs.map((t) => (
            <React.Fragment key={t.t}>
              {t.c === "active" ? (
                <div className={`${t.w} h-[35px] -mt-[4px] rounded-t-[8px] rounded-b-[5px] bg-[#f7f7f7] border border-[#d8d8d8] border-t-0 flex flex-col items-center justify-end whitespace-nowrap text-black shrink-0`}>
                  <span>{t.t}</span>
                  <span className="w-[40px] h-[3px] bg-[#107c41] mb-[3px]" />
                </div>
              ) : (
                <div className={`${t.w} ${t.c} h-[30px] shrink-0 rounded-[5px] flex items-center justify-center whitespace-nowrap`}>{t.t}</div>
              )}
              <div className="w-px h-[22px] bg-[#d4d4d4] shrink-0" />
            </React.Fragment>
          ))}
          <div className="w-[86px] h-[30px] shrink-0 rounded-l-[5px] bg-[#7030a0] text-white overflow-hidden flex items-center pl-[11px] whitespace-nowrap">DCF Analysis</div>
        </div>
        <div className="ml-[11px] flex"><Ellipsis size={18} strokeWidth={2.2} /></div>
        <div className="ml-[21px] flex"><Plus size={22} strokeWidth={1.3} /></div>
        <div className="ml-[18px] flex"><EllipsisVertical size={18} /></div>
        <div className="ml-[12px] w-[200px] h-[21px] rounded-full bg-[#f5f5f5] flex items-center justify-between px-[6px]">
          <svg width="8" height="12" viewBox="0 0 8 12"><path d="M7 1v10L1 6z" fill="#666" /></svg>
          <div className="w-[158px] h-[11px] rounded-full bg-[#707070]" />
          <svg width="8" height="12" viewBox="0 0 8 12"><path d="M1 1v10l6-5z" fill="#666" /></svg>
        </div>
      </div>
      <div className="h-px shrink-0 bg-white" />
      {/* status */}
      <div className="h-[27px] shrink-0 bg-[#f3f3f3] flex items-center text-[14px] text-[#444]">
        <span className="ml-[14px] w-[36px] pt-[2px]">Ready</span>
        <div className="ml-[25px] flex">
          <svg width="19" height="20" viewBox="0 0 19 20"><rect x="1" y="1" width="17" height="18" fill="none" stroke="#555" /><path d="M1 5h17M4 8h5M4 11h3M4 14h3" stroke="#555" /><circle cx="12" cy="13" r="4" fill="none" stroke="#555" strokeWidth="1.400" /></svg>
        </div>
        <div className="ml-[20px] flex">
          <svg width="20" height="22" viewBox="0 0 20 22"><circle cx="10" cy="3" r="2" fill="none" stroke="#555" /><path d="M1 6l7 2v5l-4 8M19 8l-7 0v5l5 8M9 13l1 3" fill="none" stroke="#555" /></svg>
        </div>
        <span className="ml-[4px] pt-[2px] font-bold text-[13.5px] text-[#444]">Accessibility: Investigate</span>
        <div className="ml-auto w-[49px] h-[27px] bg-[#dedede] flex items-center justify-center">
          <svg width="18" height="20" viewBox="0 0 18 20"><path d="M1 1h16v18H1zM1 5.500h16M1 10h16M1 14.500h16M6.300 1v18M11.600 1v18" fill="none" stroke="#444" /></svg>
        </div>
        <div className="ml-[16px] flex">
          <svg width="18" height="20" viewBox="0 0 18 20"><rect x="1" y="1" width="16" height="18" fill="none" stroke="#444" /><rect x="4" y="4" width="10" height="12" fill="none" stroke="#444" /><path d="M6 7h6M6 10h6M6 13h6" stroke="#444" /></svg>
        </div>
        <div className="ml-[32px] flex">
          <svg width="18" height="20" viewBox="0 0 18 20"><path d="M1 1h16v18H1zM6 1v8h6V1" fill="none" stroke="#444" /></svg>
        </div>
        <span className="ml-[19px] w-[10px] flex justify-center"><Minus size={12} /></span>
        <div className="ml-[6px] w-[125px] h-[15px] flex items-center relative">
          <div className="w-full h-px bg-[#666]" />
          <div className="absolute left-[53px] w-[6px] h-[15px] bg-[#555]" />
          <div className="absolute left-[62px] w-px h-[7px] bg-[#666]" />
        </div>
        <span className="ml-[5px] w-[12px] flex justify-center"><Plus size={13} strokeWidth={1.4} /></span>
        <span className="ml-[15px] mr-[19px] text-[14px] text-[#555]">90%</span>
      </div>
      {/* taskbar */}
      <div className="h-[60px] shrink-0 border-t border-[#b4bcc2] bg-[#cfe4f3] flex items-center relative">
        <div className="ml-[26px] relative w-[32px] h-[37px] shrink-0">
          <svg width="30" height="37" viewBox="0 0 30 37"><path d="M1 21c6 0 12-6 13-15 5 5 5 16-1 20H1z" fill="#f5a524" /><ellipse cx="15" cy="27" rx="14" ry="9.500" fill="#a9cdf3" /><ellipse cx="15" cy="31" rx="14" ry="5" fill="#cfe0f7" /></svg>
          <div className="absolute left-[13px] top-0 w-[19px] h-[20px] rounded-full bg-[#c4262e] text-white text-[12.5px] font-bold flex items-center justify-center">1</div>
        </div>
        <div className="ml-[6px] flex flex-col text-[15px] leading-[21px] w-[100px] whitespace-nowrap">
          <span className="text-[#333]">45°F</span><span className="text-[#6b6f73]">Mostly cloudy</span>
        </div>
        <div className="ml-[795px] flex">
          <svg width="30" height="30" viewBox="0 0 30 30">
            <defs><linearGradient id="wl" x1="0" y1="0" x2="1" y2="1"><stop offset="0" stopColor="#4fd2fb" /><stop offset="1" stopColor="#0a6fd0" /></linearGradient></defs>
            <path d="M2 0h12v14H0V2a2 2 0 0 1 2-2zM16 0h12a2 2 0 0 1 2 2v12H16zM0 16h14v14H2a2 2 0 0 1-2-2zM16 16h14v12a2 2 0 0 1-2 2H16z" fill="url(#wl)" />
          </svg>
        </div>
        <div className="ml-[18px] w-[273px] h-[38px] rounded-full bg-[#f2f7fb] border border-[#c3d4e0] flex items-center pl-[15px] relative text-[#6b6f73] text-[16.5px]">
          <Search size={20} strokeWidth={2} className="text-[#333]" /><span className="ml-[12px]">Search</span>
          <div className="absolute right-[2px] top-0 w-[62px] h-[36px] overflow-hidden">
            <svg width="62" height="36" viewBox="0 0 62 36">
              <path d="M14 36c1-8 6-9 12-10l6 2 6-2c5 1 9 3 10 10z" fill="#2a6ab8" />
              <path d="M26 28l6 6 6-6-3-2h-6z" fill="#e2622c" />
              <ellipse cx="31" cy="13" rx="11" ry="12" fill="#dcd6c8" />
              <ellipse cx="32" cy="17" rx="6.500" ry="8.500" fill="#f3c9a8" />
              <text x="3" y="22" fontSize="15" fill="#444">♪</text>
              <text x="46" y="11" fontSize="14" fill="#444">♪</text>
              <text x="48" y="28" fontSize="16" fill="#444">♫</text>
            </svg>
          </div>
        </div>
        <div className="ml-[16px] relative w-[30px] h-[28px]">
          <div className="w-[24px] h-[20px] rounded-[3px] bg-[#2a2a2a] mt-[8px]" />
          <div className="absolute left-[7px] top-0 w-[23px] h-[22px] rounded-[3px] bg-[#f1f1f1] border border-[#dddddd] opacity-95" />
        </div>
        <div className="ml-[25px] flex flex-col items-center relative">
          <svg width="30" height="28" viewBox="0 0 30 28"><path d="M0 2a2 2 0 0 1 2-2h9l3 3h14a2 2 0 0 1 2 2v3H0z" fill="#d99a1c" /><path d="M0 6h30v20a2 2 0 0 1-2 2H2a2 2 0 0 1-2-2z" fill="#ffd24d" /><rect x="9" y="19" width="12" height="9" rx="1" fill="#1a7fd6" /></svg>
          <div className="absolute -bottom-[8px] w-[7px] h-[4px] rounded-full bg-[#7d8a94]" />
        </div>
        <div className="ml-[26px] flex flex-col items-center relative">
          <svg width="28" height="30" viewBox="0 0 28 30"><ellipse cx="14" cy="15" rx="10.500" ry="12.500" fill="none" stroke="#e0232e" strokeWidth="6" /></svg>
          <div className="absolute -bottom-[7px] w-[7px] h-[4px] rounded-full bg-[#7d8a94]" />
        </div>
        <div className="ml-[26px] flex">
          <svg width="30" height="34" viewBox="0 0 30 34"><rect x="1" y="0" width="18" height="24" rx="2" fill="#eef0f2" stroke="#d6d8da" /><rect x="4" y="4" width="9" height="9" fill="none" stroke="#d23c2a" strokeWidth="2" strokeDasharray="2 1.500" /><path d="M10 14l6 6M22 14l-7 8" stroke="#999" strokeWidth="1.500" /><circle cx="15" cy="28" r="3" fill="none" stroke="#1a86d6" strokeWidth="1.500" /><circle cx="26" cy="19" r="3" fill="none" stroke="#1a86d6" strokeWidth="1.500" /></svg>
        </div>
        <div className="ml-[26px] w-[29px] h-[29px] rounded-full bg-black text-white flex items-center justify-center text-[18px] font-bold relative">
          <span className="leading-[18px] pb-[2px]">up</span>
          <div className="absolute -bottom-[8px] w-[7px] h-[4px] rounded-full bg-[#7d8a94]" />
        </div>
        <div className="ml-[26px] relative flex">
          <ExcelLogo s={28} />
          <div className="absolute -bottom-[8px] left-[11px] w-[7px] h-[4px] rounded-full bg-[#7d8a94]" />
        </div>
        <div className="ml-[749px] flex"><ChevronUp size={20} strokeWidth={1.4} /></div>
        <div className="ml-[20px] flex">
          <svg width="20" height="22" viewBox="0 0 20 22"><path d="M14 3H1v14h13M8 17v3M3 21h11" fill="none" stroke="#333" /><rect x="15" y="1" width="4" height="8" rx="2" fill="none" stroke="#333" /><path d="M17 9v12" stroke="#333" /></svg>
        </div>
        <div className="ml-[11px] flex">
          <svg width="20" height="20" viewBox="0 0 20 20"><path d="M1 7h4l5-5v16l-5-5H1zM13 6c2 2 2 6 0 8M15 4c3 3 3 9 0 12M17 2c4 4 4 12 0 16" fill="none" stroke="#333" /></svg>
        </div>
        <div className="ml-auto mr-[25px] flex flex-col items-end text-[15px] leading-[20px] text-[#222]">
          <span>7:38 AM</span><span>12/16/2024</span>
        </div>
      </div>
    </div>
  );
}
